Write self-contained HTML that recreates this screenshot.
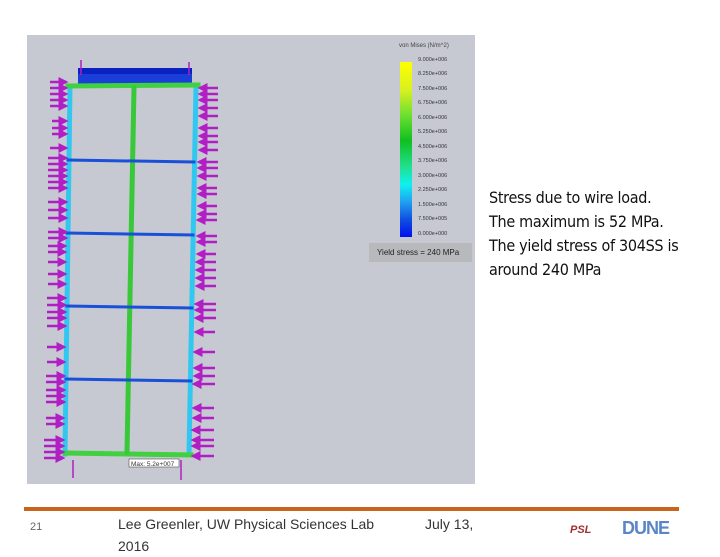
<!DOCTYPE html>
<html><head><meta charset="utf-8"><style>
body{margin:0;width:720px;height:540px;background:#fff;position:relative;overflow:hidden;font-family:"Liberation Sans",sans-serif}
.t{position:absolute;left:489px;top:186px;font-size:16px;line-height:24px;color:#111;font-family:"DejaVu Sans Condensed","Liberation Sans",sans-serif;letter-spacing:-0.3px}
.f{position:absolute;font-size:14px;color:#333;top:513px;line-height:22px}
</style></head><body>
<svg width="720" height="540" style="position:absolute;left:0;top:0">
<defs>
<marker id="ah" markerWidth="4" markerHeight="4" refX="3" refY="2" orient="auto"><path d="M0,0L4,2L0,4z" fill="#b01ec4"/></marker>
<linearGradient id="cb" x1="0" y1="0" x2="0" y2="1">
<stop offset="0" stop-color="#ffff00"/><stop offset="0.16" stop-color="#d8f020"/><stop offset="0.3" stop-color="#70e030"/><stop offset="0.45" stop-color="#10c020"/><stop offset="0.6" stop-color="#20e090"/><stop offset="0.7" stop-color="#10f0f0"/><stop offset="0.8" stop-color="#20a0f0"/><stop offset="0.9" stop-color="#1050e0"/><stop offset="1" stop-color="#0010f0"/></linearGradient>
</defs>
<rect x="27" y="35" width="448" height="449" fill="#c6c9d2"/>
<rect x="78" y="68" width="114" height="17" fill="#1a3fd8"/>
<rect x="78" y="68" width="114" height="6" fill="#0a20c0"/>
<g stroke-linecap="square">
<line x1="70" y1="86" x2="65" y2="454" stroke="#30c8f0" stroke-width="5"/>
<line x1="196" y1="86" x2="189" y2="454" stroke="#30c8f0" stroke-width="5"/>
<line x1="68" y1="86" x2="198" y2="85" stroke="#40d040" stroke-width="5"/>
<line x1="65" y1="453" x2="191" y2="455" stroke="#40d040" stroke-width="5"/>
<line x1="134" y1="88" x2="127" y2="452" stroke="#38c838" stroke-width="5"/>
<line x1="68" y1="160" x2="194" y2="162" stroke="#1a50d8" stroke-width="3"/>
<line x1="67" y1="233" x2="193" y2="235" stroke="#1a50d8" stroke-width="3"/>
<line x1="67" y1="306" x2="192" y2="308" stroke="#1a50d8" stroke-width="3"/>
<line x1="66" y1="379" x2="191" y2="381" stroke="#1a50d8" stroke-width="3"/>
</g>
<g stroke="#b01ec4" stroke-width="2.5" marker-end="url(#ah)">
<line x1="50" y1="82" x2="66" y2="82"/><line x1="50" y1="88" x2="66" y2="88"/><line x1="50" y1="94" x2="66" y2="94"/><line x1="50" y1="100" x2="66" y2="100"/><line x1="50" y1="106" x2="66" y2="106"/><line x1="52" y1="121" x2="66" y2="121"/><line x1="52" y1="128" x2="66" y2="128"/><line x1="52" y1="134" x2="66" y2="134"/><line x1="50" y1="148" x2="66" y2="148"/><line x1="48" y1="158" x2="66" y2="158"/><line x1="48" y1="164" x2="66" y2="164"/><line x1="48" y1="170" x2="66" y2="170"/><line x1="48" y1="176" x2="66" y2="176"/><line x1="48" y1="182" x2="66" y2="182"/><line x1="48" y1="188" x2="66" y2="188"/><line x1="48" y1="202" x2="66" y2="202"/><line x1="48" y1="210" x2="66" y2="210"/><line x1="48" y1="218" x2="66" y2="218"/><line x1="48" y1="232" x2="66" y2="232"/><line x1="48" y1="238" x2="66" y2="238"/><line x1="48" y1="246" x2="65" y2="246"/><line x1="48" y1="252" x2="65" y2="252"/><line x1="48" y1="262" x2="65" y2="262"/><line x1="48" y1="274" x2="65" y2="274"/><line x1="48" y1="284" x2="65" y2="284"/><line x1="47" y1="298" x2="65" y2="298"/><line x1="47" y1="305" x2="65" y2="305"/><line x1="47" y1="312" x2="65" y2="312"/><line x1="47" y1="318" x2="65" y2="318"/><line x1="47" y1="326" x2="65" y2="326"/><line x1="47" y1="347" x2="64" y2="347"/><line x1="47" y1="362" x2="64" y2="362"/><line x1="46" y1="376" x2="64" y2="376"/><line x1="46" y1="382" x2="64" y2="382"/><line x1="46" y1="390" x2="64" y2="390"/><line x1="46" y1="396" x2="64" y2="396"/><line x1="46" y1="402" x2="64" y2="402"/><line x1="46" y1="418" x2="63" y2="418"/><line x1="46" y1="424" x2="63" y2="424"/><line x1="44" y1="440" x2="63" y2="440"/><line x1="44" y1="446" x2="63" y2="446"/><line x1="44" y1="452" x2="63" y2="452"/><line x1="44" y1="458" x2="63" y2="458"/>
</g>
<g stroke="#b01ec4" stroke-width="2.5" marker-end="url(#ah)">
<line x1="218" y1="88" x2="200" y2="88"/><line x1="218" y1="94" x2="200" y2="94"/><line x1="218" y1="100" x2="200" y2="100"/><line x1="218" y1="108" x2="200" y2="108"/><line x1="218" y1="116" x2="200" y2="116"/><line x1="218" y1="128" x2="200" y2="128"/><line x1="218" y1="136" x2="200" y2="136"/><line x1="218" y1="142" x2="200" y2="142"/><line x1="218" y1="150" x2="200" y2="150"/><line x1="218" y1="162" x2="199" y2="162"/><line x1="218" y1="168" x2="199" y2="168"/><line x1="218" y1="176" x2="199" y2="176"/><line x1="217" y1="188" x2="199" y2="188"/><line x1="217" y1="194" x2="199" y2="194"/><line x1="217" y1="206" x2="199" y2="206"/><line x1="217" y1="214" x2="199" y2="214"/><line x1="217" y1="220" x2="198" y2="220"/><line x1="217" y1="236" x2="198" y2="236"/><line x1="217" y1="242" x2="198" y2="242"/><line x1="216" y1="254" x2="198" y2="254"/><line x1="216" y1="262" x2="197" y2="262"/><line x1="216" y1="270" x2="197" y2="270"/><line x1="216" y1="278" x2="197" y2="278"/><line x1="216" y1="286" x2="197" y2="286"/><line x1="216" y1="304" x2="196" y2="304"/><line x1="216" y1="310" x2="196" y2="310"/><line x1="216" y1="318" x2="196" y2="318"/><line x1="215" y1="332" x2="196" y2="332"/><line x1="215" y1="352" x2="195" y2="352"/><line x1="215" y1="368" x2="195" y2="368"/><line x1="215" y1="376" x2="195" y2="376"/><line x1="215" y1="384" x2="194" y2="384"/><line x1="214" y1="408" x2="194" y2="408"/><line x1="214" y1="418" x2="194" y2="418"/><line x1="214" y1="430" x2="193" y2="430"/><line x1="214" y1="440" x2="193" y2="440"/><line x1="214" y1="446" x2="193" y2="446"/><line x1="214" y1="456" x2="193" y2="456"/>
</g>
<g stroke="#b01ec4" stroke-width="1.5"><line x1="81" y1="60" x2="81" y2="75"/><line x1="189" y1="62" x2="189" y2="75"/><line x1="73" y1="460" x2="73" y2="478"/><line x1="181" y1="460" x2="181" y2="480"/></g>
<rect x="129" y="459" width="50" height="8" fill="#fff" stroke="#333" stroke-width="0.5"/>
<text x="131" y="466" font-size="6.5" fill="#333">Max: 5.2e+007</text>
<text x="399" y="47" font-size="6" fill="#444">von Mises (N/m^2)</text>
<rect x="400" y="62" width="12" height="175" fill="url(#cb)"/>
<g font-size="5.5" fill="#333">
<text x="418" y="61">9.000e+006</text><text x="418" y="75">8.250e+006</text><text x="418" y="90">7.500e+006</text><text x="418" y="104">6.750e+006</text><text x="418" y="119">6.000e+006</text><text x="418" y="133">5.250e+006</text><text x="418" y="148">4.500e+006</text><text x="418" y="162">3.750e+006</text><text x="418" y="177">3.000e+006</text><text x="418" y="191">2.250e+006</text><text x="418" y="206">1.500e+006</text><text x="418" y="220">7.500e+005</text><text x="418" y="235">0.000e+000</text>
</g>
<rect x="369" y="243" width="103" height="19" fill="#b8b9bc"/>
<text x="377" y="255" font-size="8" fill="#222">Yield stress = 240 MPa</text>
<rect x="24" y="507" width="655" height="4" fill="#c8641e"/>
<text x="570" y="533" font-size="11" font-weight="bold" font-style="italic" fill="#a03030">PSL</text>
<text x="622" y="534" font-size="18" font-weight="bold" fill="#5a86c8" letter-spacing="-1">DUNE</text>
</svg>
<div class="t">Stress due to wire load.<br>The maximum is 52 MPa.<br>The yield stress of 304SS is<br>around 240 MPa</div>
<div class="f" style="left:30px;font-size:11px;top:516px;color:#666">21</div>
<div class="f" style="left:118px">Lee Greenler, UW Physical Sciences Lab<br>2016</div>
<div class="f" style="left:425px">July 13,</div>
</body></html>
